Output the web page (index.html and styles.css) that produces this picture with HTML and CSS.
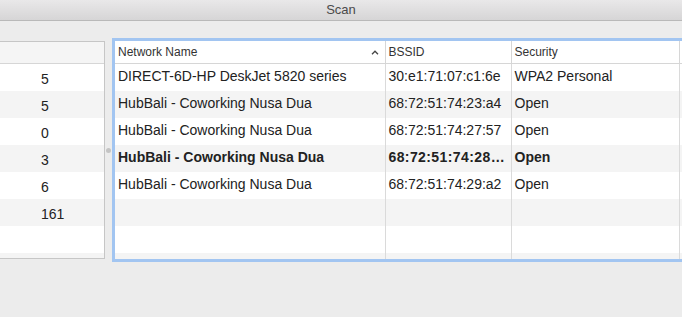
FILE: index.html
```html
<!DOCTYPE html>
<html lang="en">
<head>
  <meta charset="UTF-8" />
  <title>Scan</title>
  <link rel="stylesheet" href="styles.css">
</head>
<body>

  <div class="window">
    <header class="titlebar">Scan</header>

    <div class="content">
      <div class="counts">
        <div class="counts-head"></div>
        <div class="count-row">5</div>
        <div class="count-row">5</div>
        <div class="count-row">0</div>
        <div class="count-row">3</div>
        <div class="count-row">6</div>
        <div class="count-row">161</div>
        <div class="count-row"></div>
        <div class="count-row"></div>
      </div>

      <div class="splitter"><span class="knob"></span></div>

      <div class="networks">
        <table class="net-table">
          <colgroup>
            <col class="col-name">
            <col class="col-bssid">
            <col class="col-security">
            <col class="col-extra">
          </colgroup>
          <thead>
            <tr>
              <th class="sorted">Network Name
                <svg class="caret" width="8" height="5" viewBox="0 0 8 5"><path d="M1 4.2 L4 1.2 L7 4.2" fill="none" stroke="#444" stroke-width="1.3"/></svg>
              </th>
              <th>BSSID</th>
              <th>Security</th>
              <th></th>
            </tr>
          </thead>
          <tbody>
            <tr><td>DIRECT-6D-HP DeskJet 5820 series</td><td>30:e1:71:07:c1:6e</td><td>WPA2 Personal</td><td></td></tr>
            <tr><td>HubBali - Coworking Nusa Dua</td><td>68:72:51:74:23:a4</td><td>Open</td><td></td></tr>
            <tr><td>HubBali - Coworking Nusa Dua</td><td>68:72:51:74:27:57</td><td>Open</td><td></td></tr>
            <tr class="current"><td>HubBali - Coworking Nusa Dua</td><td class="bssid">68:72:51:74:28:5c</td><td>Open</td><td></td></tr>
            <tr><td>HubBali - Coworking Nusa Dua</td><td>68:72:51:74:29:a2</td><td>Open</td><td></td></tr>
            <tr><td></td><td></td><td></td><td></td></tr>
            <tr><td></td><td></td><td></td><td></td></tr>
            <tr><td></td><td></td><td></td><td></td></tr>
          </tbody>
        </table>
      </div>
    </div>
  </div>

</body>
</html>
```

FILE: styles.css
```css
body {
  margin: 0;
  background-color: #ececec;
  font-family: "Liberation Sans", Helvetica, Arial, sans-serif;
  color: #222;
  overflow: hidden;
}

.window {
  width: 682px;
  height: 317px;
  overflow: hidden;
}

.titlebar {
  height: 20px;
  line-height: 20px;
  text-align: center;
  font-size: 13px;
  color: #4a4a4a;
  background: linear-gradient(#e9e8e9, #d6d5d6);
  border-bottom: 1px solid #b9b9b9;
}

.content {
  display: flex;
  align-items: flex-start;
  padding-top: 17px;
}

/* Left count list */
.counts {
  flex-shrink: 0;
  margin-left: -1px;
  margin-top: 3px;
  width: 104px;
  height: 216px;
  border: 1px solid #c6c6c6;
  background-color: #fff;
  overflow: hidden;
  font-size: 14px;
}

.counts-head {
  height: 21px;
  background-color: #f5f5f5;
  border-bottom: 1px solid #d6d6d6;
}

.count-row {
  box-sizing: border-box;
  height: 27px;
  padding: 3px 0 0 41px;
  line-height: 24px;
}

.count-row:nth-child(odd) {
  background-color: #f4f4f4;
}

.splitter {
  flex-shrink: 0;
  width: 7px;
  height: 221px;
  position: relative;
}

.knob {
  position: absolute;
  left: 1px;
  top: 110px;
  width: 5px;
  height: 5px;
  border-radius: 50%;
  background-color: #c4c4c4;
}

/* Network table */
.networks {
  flex-shrink: 0;
  width: 700px;
  height: 218px;
  border: 3px solid #a2c5f1;
  border-right: none;
  background-color: #fff;
  overflow: hidden;
}

.net-table {
  border-collapse: collapse;
  table-layout: fixed;
  width: 700px;
  font-size: 14px;
}

.col-name { width: 270px; }
.col-bssid { width: 126px; }
.col-security { width: 168px; }
.col-extra { width: 136px; }

.net-table th {
  height: 22px;
  padding: 0 4px 0 3px;
  font-size: 12px;
  font-weight: normal;
  color: #333;
  text-align: left;
  border-bottom: 1px solid #d6d6d6;
  border-right: 1px solid #d6d6d6;
}

.net-table th.sorted {
  position: relative;
}

.caret {
  position: absolute;
  right: 6px;
  top: 9px;
}

.net-table td {
  height: 27px;
  padding: 0 4px 2px 3px;
  border-right: 1px solid #dadada;
  white-space: nowrap;
  overflow: hidden;
  text-overflow: ellipsis;
  box-sizing: border-box;
}

.net-table tbody tr:nth-child(even) {
  background-color: #f4f4f4;
}

.net-table tr.current td {
  font-weight: bold;
}

.net-table tr.current td.bssid {
  letter-spacing: 0.4px;
}
```
